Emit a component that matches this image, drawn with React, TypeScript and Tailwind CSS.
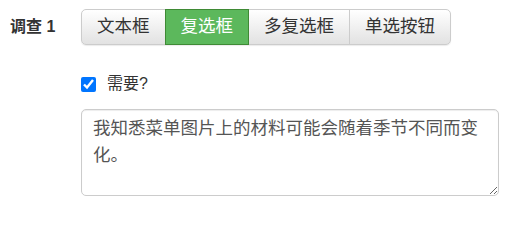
export default function App() {
  const tabs = ["文本框", "复选框", "多复选框", "单选按钮"];
  const active = 1;

  return (
    <div
      className="w-[507px] h-[204px] bg-white pt-[9px] pl-[10px] text-[#333]"
      style={{ fontFamily: '"Liberation Sans", "Noto Sans CJK SC", sans-serif' }}
    >
      <div className="flex items-center">
        <div className="w-[71px] text-[length:16px] font-bold">调查 1</div>
        <div className="flex h-[36px] rounded-[5px] shadow-[0_1px_1px_rgba(0,0,0,0.08)]">
          {tabs.map((t, i) => (
            <button
              key={t}
              className={
                "h-full px-[15px] text-[length:17.5px] leading-none border " +
                (i > 0 ? "-ml-px " : "") +
                (i === 0 ? "rounded-l-[5px] " : "") +
                (i === tabs.length - 1 ? "rounded-r-[5px] " : "") +
                (i === active
                  ? "relative z-10 bg-[#5cb85c] border-[#3f8a35] text-white"
                  : "bg-gradient-to-b from-white to-[#e2e2e2] border-[#ccc] text-[#333]")
              }
            >
              {t}
            </button>
          ))}
        </div>
      </div>

      <div className="ml-[71px] mt-[27px] flex h-[24px] items-center">
        <input
          type="checkbox"
          defaultChecked
          className="m-0 w-[15px] h-[15px] accent-[#0075ff]"
        />
        <span className="ml-[11px] text-[length:16px]">需要?</span>
      </div>

      <div className="ml-[71px] mt-[13px]">
        <textarea
          defaultValue="我知悉菜单图片上的材料可能会随着季节不同而变化。"
          className="block w-[418px] h-[87px] rounded-[5px] border border-[#ccc] px-[11px] pt-[5px] text-[length:17.5px] leading-[27px] text-[#555] shadow-[inset_0_1px_1px_rgba(0,0,0,0.075)] outline-none resize-y"
        />
      </div>
    </div>
  );
}
